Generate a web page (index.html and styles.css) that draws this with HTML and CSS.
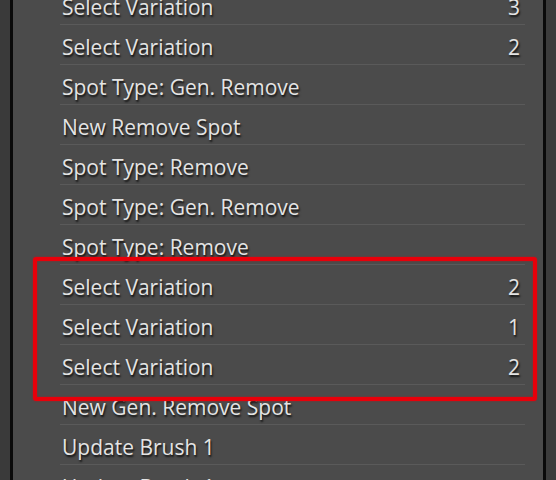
FILE: index.html
```html
<!DOCTYPE html>
<html>
<head>
<meta charset="utf-8">
<link rel="stylesheet" href="styles.css">
</head>
<body>
<div class="frame">
  <div class="gutter"></div>
  <div class="panel">
    <ul class="history">
      <li class="row"><span class="label">Select Variation</span><span class="num">3</span></li>
      <li class="row"><span class="label">Select Variation</span><span class="num">2</span></li>
      <li class="row"><span class="label">Spot Type: Gen. Remove</span></li>
      <li class="row"><span class="label">New Remove Spot</span></li>
      <li class="row"><span class="label">Spot Type: Remove</span></li>
      <li class="row"><span class="label">Spot Type: Gen. Remove</span></li>
      <li class="row"><span class="label">Spot Type: Remove</span></li>
      <li class="row"><span class="label">Select Variation</span><span class="num">2</span></li>
      <li class="row"><span class="label">Select Variation</span><span class="num">1</span></li>
      <li class="row"><span class="label">Select Variation</span><span class="num">2</span></li>
      <li class="row"><span class="label">New Gen. Remove Spot</span></li>
      <li class="row"><span class="label">Update Brush 1</span></li>
      <li class="row"><span class="label">Update Brush 1</span></li>
    </ul>
  </div>
  <div class="side"></div>
</div>
<div class="highlight"></div>
</body>
</html>
```
FILE: styles.css
```css
html, body {
  margin: 0;
  padding: 0;
  height: 100%;
  overflow: hidden;
  background: #3b3b3b;
}
.frame {
  display: flex;
  height: 480px;
  width: 556px;
}
.gutter {
  width: 10px;
  background: #3a3a3a;
  border-right: 3px solid #0a0a0a;
}
.panel {
  width: 530px;
  background: #4b4b4b;
  overflow: hidden;
}
.side {
  flex: 1;
  background: #3c3c3c;
  border-left: 3px solid #0a0a0a;
}
.history {
  list-style: none;
  margin: -15px 18px 0 47px;
  padding: 0;
}
.row {
  display: flex;
  justify-content: space-between;
  align-items: center;
  padding: 4px 5px 0 2px;
  box-sizing: border-box;
  height: 40px;
  border-bottom: 1px solid #5a5a5a;
  font-family: "Open Sans", "Noto Sans", sans-serif;
  font-size: 21px;
  color: #e4e4e4;
  text-shadow: 1px 2px 2px rgba(0, 0, 0, 0.8);
}
.highlight {
  position: absolute;
  left: 33px;
  top: 257px;
  width: 496px;
  height: 136px;
  border: 4px solid #e8000a;
  border-radius: 3px;
  box-shadow: 0 0 2px rgba(230, 0, 10, 0.6), inset 0 0 2px rgba(230, 0, 10, 0.6);
}
```
